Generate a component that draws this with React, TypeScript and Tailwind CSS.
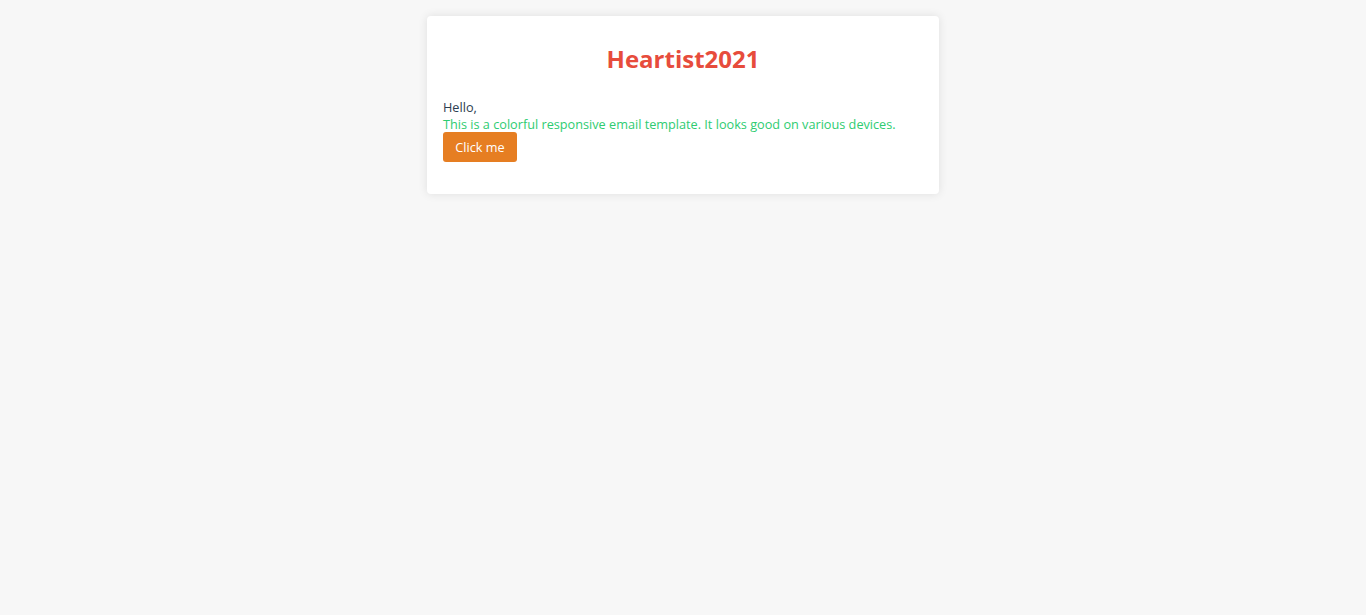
export default function App() {
  return (
    <div className="min-h-[615px] bg-[#f7f7f7] pt-4 font-['Open_Sans',sans-serif]">
      <div className="mx-auto w-[512px] rounded bg-white px-4 pb-8 pt-[27px] shadow-[0_0_10px_rgba(0,0,0,0.1)]">
        <h1 className="text-center text-[24px] font-bold leading-[32px] text-[#e74c3c]">
          Heartist2021
        </h1>
        <div className="mt-[24px] text-[12.7px] leading-[17px]">
          <p className="text-[#2c3e50]">Hello,</p>
          <p className="leading-[16px] text-[#2ecc71]">
            This is a colorful responsive email template. It looks good on various devices.
          </p>
          <button className="h-[30px] w-[74px] rounded-[3px] bg-[#e67e22] text-[12.7px] text-white">
            Click me
          </button>
        </div>
      </div>
    </div>
  );
}
